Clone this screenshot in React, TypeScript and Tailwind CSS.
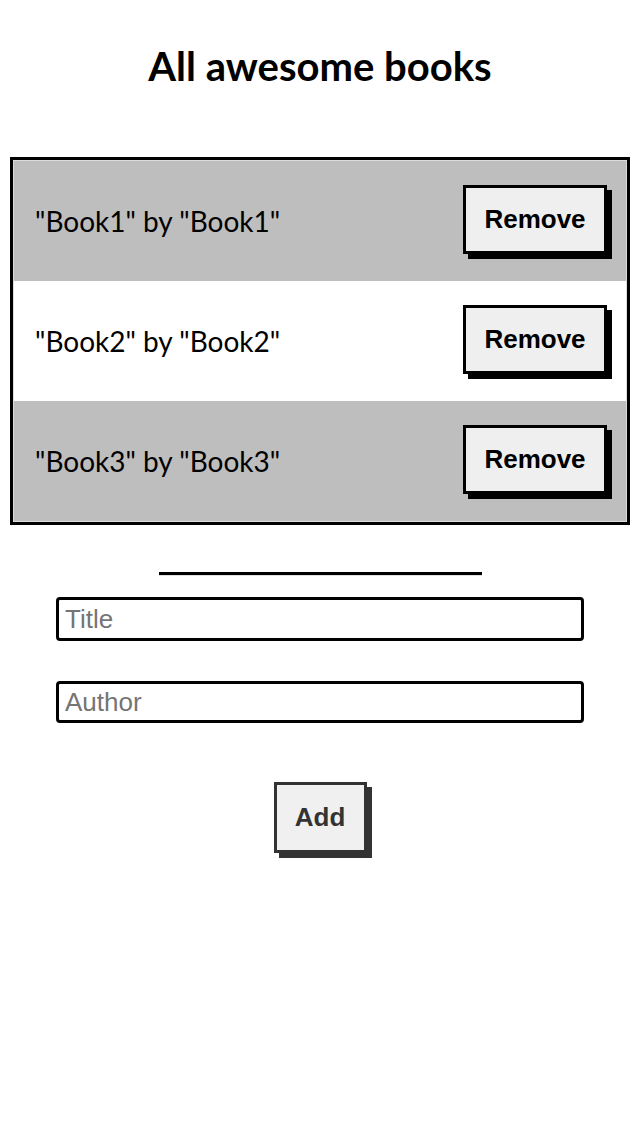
import React from "react";

const books = [
  { title: "Book1", author: "Book1" },
  { title: "Book2", author: "Book2" },
  { title: "Book3", author: "Book3" },
];

export default function App() {
  return (
    <div className="min-h-screen bg-white text-black">
      <h1
        className="pt-[42px] text-center text-[40px] font-bold leading-[1.2]"
        style={{ fontFamily: "Lato, sans-serif" }}
      >
        All awesome books
      </h1>
      <ul className="mx-[10px] mt-[67px] border-[3px] border-black p-px shadow-[inset_0_0_0_1px_#dcdcdc]">
        {books.map((b, i) => (
          <li
            key={i}
            className={`flex h-[120px] items-center justify-between pl-[21px] pr-[19px] ${
              i % 2 === 0 ? "bg-[#bebebe]" : "bg-white"
            }`}
          >
            <span
              className="text-[28px] leading-none"
              style={{ fontFamily: "Lato, sans-serif" }}
            >
              "{b.title}" by "{b.author}"
            </span>
            <button
              className="mb-[3px] flex h-[69px] w-[144px] items-center justify-center border-[3px] border-black bg-[#efefef] text-[26px] font-bold shadow-[5px_5px_0_#000]"
              style={{ fontFamily: '"Liberation Sans", Arial, sans-serif' }}
            >
              Remove
            </button>
          </li>
        ))}
      </ul>
      <hr className="mx-auto mt-[47px] h-0 w-[323px] border-0 border-t-[3px] border-b border-t-black border-b-[#e0e0e0]" />
      <form
        className="flex flex-col items-center"
        style={{ fontFamily: '"Liberation Sans", Arial, sans-serif' }}
        onSubmit={(e) => e.preventDefault()}
      >
        <input
          type="text"
          placeholder="Title"
          className="mt-[21px] h-[44px] w-[528px] rounded-[4px] border-[3px] border-black px-[6px] text-[26px] placeholder:text-[#757575] outline-none"
        />
        <input
          type="text"
          placeholder="Author"
          className="mt-[40px] h-[42px] w-[528px] rounded-[4px] border-[3px] border-black px-[6px] text-[26px] placeholder:text-[#757575] outline-none"
        />
        <button
          type="submit"
          className="mt-[59px] flex h-[71px] w-[93px] items-center justify-center border-[3px] border-[#333] bg-[#f0f0f0] text-[26px] font-bold text-[#333] shadow-[5px_5px_0_#333]"
        >
          Add
        </button>
      </form>
    </div>
  );
}
